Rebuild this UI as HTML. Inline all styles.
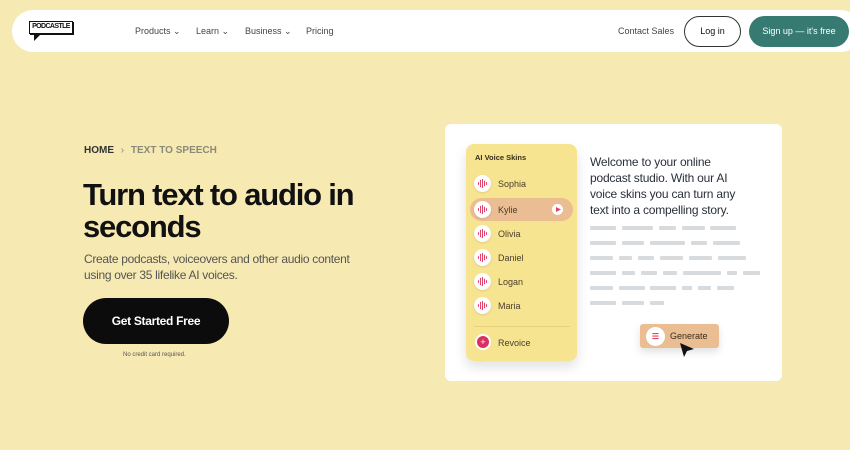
<!DOCTYPE html>
<html><head><meta charset="utf-8"><style>
*{margin:0;padding:0;box-sizing:border-box}
body{width:850px;height:450px;background:#f6e9b2;font-family:"Liberation Sans",sans-serif;position:relative;overflow:hidden;color:#111}
.abs{position:absolute}
.nav{left:12px;top:10px;width:850px;height:42px;background:#fff;border-radius:21px}
.nl{font-size:9px;color:#444;top:26px}
.bar{position:absolute;height:4px;background:#d8dbdd;border-radius:1px}
.v{position:absolute;left:474px;width:17px;height:17px;border-radius:50%;background:#fff;box-shadow:0 1px 2px rgba(0,0,0,.1)}
.v::after{content:"";position:absolute;left:4px;top:4px;width:9px;height:9px;background:repeating-linear-gradient(90deg,#e0466a 0 1px,transparent 1px 2px);clip-path:polygon(0 35%,20% 35%,20% 10%,40% 10%,40% 0,60% 0,60% 20%,80% 20%,80% 35%,100% 35%,100% 65%,80% 65%,80% 80%,60% 80%,60% 100%,40% 100%,40% 90%,20% 90%,20% 65%,0 65%)}
.vn{position:absolute;left:498px;font-size:9px;color:#4a3e2a}
</style></head><body>
<div class="abs nav"></div>
<div class="abs" style="left:29px;top:21px;width:44px;height:13px;border:1.5px solid #111;box-shadow:1px 1px 0 #111;font-size:7px;font-weight:bold;line-height:10px;text-align:center;letter-spacing:-.6px;overflow:hidden;white-space:nowrap">PODCASTLE</div>
<div class="abs" style="left:34px;top:35px;width:6px;height:6px;background:#111;clip-path:polygon(0 0,100% 0,0 100%)"></div>
<div class="abs nl" style="left:135px">Products ⌄</div>
<div class="abs nl" style="left:196px">Learn ⌄</div>
<div class="abs nl" style="left:245px">Business ⌄</div>
<div class="abs nl" style="left:306px">Pricing</div>
<div class="abs nl" style="left:618px">Contact Sales</div>
<div class="abs" style="left:684px;top:16px;width:57px;height:31px;border:1px solid #333;border-radius:16px;font-size:9px;text-align:center;line-height:29px">Log in</div>
<div class="abs" style="left:749px;top:16px;width:100px;height:31px;background:#377a72;border-radius:16px;font-size:9px;color:#fff;text-align:center;line-height:31px">Sign up — it's free</div>

<div class="abs" style="left:84px;top:145px;font-size:10px;font-weight:bold;color:#333">HOME <span style="color:#888;font-weight:normal;margin:0 4px">›</span> <span style="color:#8a8a78">TEXT TO SPEECH</span></div>
<div class="abs" style="left:83px;top:179px;font-size:31px;font-weight:bold;line-height:32px;letter-spacing:-1.2px">Turn text to audio in<br>seconds</div>
<div class="abs" style="left:84px;top:251px;font-size:12px;color:#555;line-height:16px;letter-spacing:-.3px">Create podcasts, voiceovers and other audio content<br>using over 35 lifelike AI voices.</div>
<div class="abs" style="left:83px;top:298px;width:146px;height:46px;background:#0c0c0c;border-radius:23px;color:#fff;font-size:12px;font-weight:bold;text-align:center;line-height:46px;letter-spacing:-.3px">Get Started Free</div>
<div class="abs" style="left:123px;top:352px;font-size:6px;color:#555">No credit card required.</div>

<div class="abs" style="left:445px;top:124px;width:337px;height:257px;background:#fff;border-radius:6px"></div>
<div class="abs" style="left:466px;top:144px;width:111px;height:217px;background:#f6e491;border-radius:8px;box-shadow:0 6px 12px rgba(0,0,0,.12)"></div>
<div class="abs" style="left:475px;top:153px;font-size:7.5px;font-weight:bold;color:#3a2e1a">AI Voice Skins</div>
<div class="abs" style="left:470px;top:198px;width:103px;height:23px;background:#ebbd92;border-radius:12px"></div>
<div class="abs" style="left:552px;top:204px;width:11px;height:11px;border-radius:50%;background:#fff"></div>
<div class="abs" style="left:556px;top:207px;width:5px;height:5px;background:#e0466a;clip-path:polygon(0 0,100% 50%,0 100%)"></div>
<div class="v" style="top:175px"></div><div class="vn" style="top:179px">Sophia</div>
<div class="v" style="top:201px"></div><div class="vn" style="top:205px">Kylie</div>
<div class="v" style="top:225px"></div><div class="vn" style="top:229px">Olivia</div>
<div class="v" style="top:249px"></div><div class="vn" style="top:253px">Daniel</div>
<div class="v" style="top:273px"></div><div class="vn" style="top:277px">Logan</div>
<div class="v" style="top:297px"></div><div class="vn" style="top:301px">Maria</div>
<div class="abs" style="left:474px;top:326px;width:96px;height:1px;background:#e6d27c"></div>
<div class="abs" style="left:475px;top:334px;width:16px;height:16px;border-radius:50%;background:#d9305e;border:2px solid #fff;color:#fff;font-size:9px;text-align:center;line-height:12px">+</div>
<div class="vn" style="top:338px">Revoice</div>

<div class="abs" style="left:590px;top:154px;font-size:12px;line-height:16px;color:#2a2f3a;letter-spacing:-.2px">Welcome to your online<br>podcast studio. With our AI<br>voice skins you can turn any<br>text into a compelling story.</div>
<div class="bar" style="top:226px;left:590px;width:26px"></div><div class="bar" style="top:226px;left:622px;width:31px"></div><div class="bar" style="top:226px;left:659px;width:17px"></div><div class="bar" style="top:226px;left:682px;width:23px"></div><div class="bar" style="top:226px;left:710px;width:26px"></div>
<div class="bar" style="top:241px;left:590px;width:26px"></div><div class="bar" style="top:241px;left:622px;width:22px"></div><div class="bar" style="top:241px;left:650px;width:35px"></div><div class="bar" style="top:241px;left:691px;width:16px"></div><div class="bar" style="top:241px;left:713px;width:27px"></div>
<div class="bar" style="top:256px;left:590px;width:23px"></div><div class="bar" style="top:256px;left:619px;width:13px"></div><div class="bar" style="top:256px;left:638px;width:16px"></div><div class="bar" style="top:256px;left:660px;width:23px"></div><div class="bar" style="top:256px;left:689px;width:23px"></div><div class="bar" style="top:256px;left:718px;width:28px"></div>
<div class="bar" style="top:271px;left:590px;width:26px"></div><div class="bar" style="top:271px;left:622px;width:13px"></div><div class="bar" style="top:271px;left:641px;width:16px"></div><div class="bar" style="top:271px;left:663px;width:14px"></div><div class="bar" style="top:271px;left:683px;width:38px"></div><div class="bar" style="top:271px;left:727px;width:10px"></div><div class="bar" style="top:271px;left:743px;width:17px"></div>
<div class="bar" style="top:286px;left:590px;width:23px"></div><div class="bar" style="top:286px;left:619px;width:26px"></div><div class="bar" style="top:286px;left:650px;width:26px"></div><div class="bar" style="top:286px;left:682px;width:10px"></div><div class="bar" style="top:286px;left:698px;width:13px"></div><div class="bar" style="top:286px;left:717px;width:17px"></div>
<div class="bar" style="top:301px;left:590px;width:26px"></div><div class="bar" style="top:301px;left:622px;width:22px"></div><div class="bar" style="top:301px;left:650px;width:14px"></div>

<div class="abs" style="left:640px;top:324px;width:79px;height:24px;background:#ebbd92;border-radius:3px;box-shadow:0 4px 8px rgba(0,0,0,.12)"></div>
<div class="abs" style="left:646px;top:327px;width:19px;height:19px;border-radius:50%;background:#fff;color:#e0466a;font-size:8px;text-align:center;line-height:19px;font-weight:bold">☰</div>
<div class="abs" style="left:670px;top:331px;font-size:9px;color:#3a2e1a">Generate</div>
<svg class="abs" style="left:678px;top:342px" width="18" height="16" viewBox="0 0 18 16"><path d="M2 1 L16 7 L9 9 L6 15 Z" fill="#111"/></svg>
</body></html>
